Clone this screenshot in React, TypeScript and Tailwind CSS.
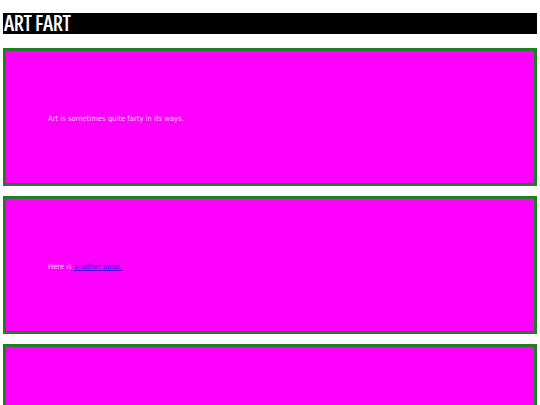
import React from 'react';

const boxes = [
    { id: 1, content: <>Art is sometimes quite farty in its ways.</> },
    {
        id: 2,
        content: (
            <>
                Here is{' '}
                <a href="#" className="text-[#3a10e8] underline">
                    another page.
                </a>
            </>
        ),
    },
    { id: 3, content: null },
];

const App = () => {
    return (
        <div className="min-h-screen bg-white px-[3px] pt-[13px] font-stretch-condensed">
            {/* Titel */}
            <h1 className="h-[21px] bg-black pl-[1px] font-['Open_Sans',sans-serif] text-[21px] font-semibold leading-[21px] tracking-[-0.4px] text-white">
                ART FART
            </h1>

            {/* Kästen */}
            <div className="mt-[14px] flex flex-col gap-[10px]">
                {boxes.map((box) => (
                    <div
                        key={box.id}
                        className="flex h-[138px] items-center border-[3px] border-[#1f7f24] bg-[#ff00ff] pl-[42px]"
                    >
                        <p className="pt-[4px] font-['DejaVu_Sans',sans-serif] text-[7.6px] leading-none text-[#ffccff]">
                            {box.content}
                        </p>
                    </div>
                ))}
            </div>
        </div>
    );
};

export default App;
